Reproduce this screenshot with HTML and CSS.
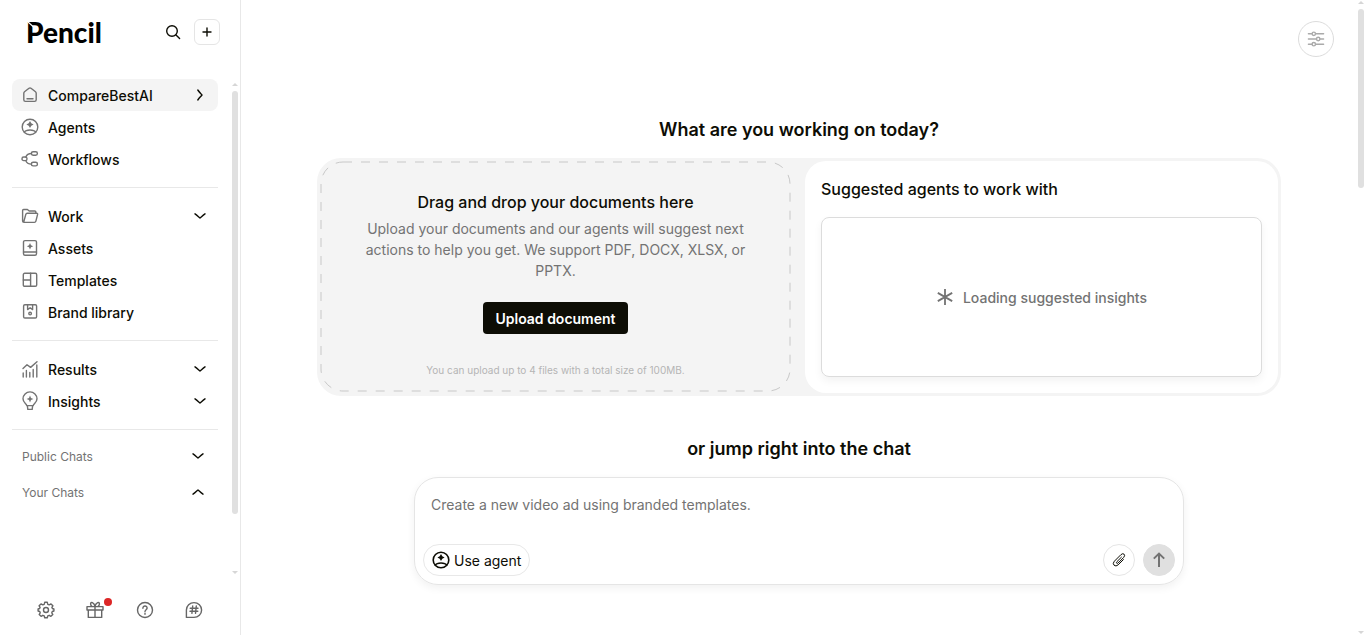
FILE: index.html
```html
<!DOCTYPE html>
<html lang="en">
<head>
    <meta charset="UTF-8">
    <meta name="viewport" content="width=device-width, initial-scale=1.0">
    <title>Pencil</title>
    <link rel="stylesheet" href="styles.css">
</head>
<body>
    <!-- shared icons -->
    <svg class="sprite" aria-hidden="true">
        <symbol id="chevron" viewBox="0 0 12 12">
            <path d="M1 3.8 C3.5 5.5 4.5 6.8 6 8 C7.5 6.8 8.5 5.5 11 3.8"/>
        </symbol>
        <symbol id="agent" viewBox="0 0 18 18">
            <circle cx="9" cy="9" r="7.8"/>
            <path d="M3.3 14.2 C5 11.2 13 11.2 14.7 14.2"/>
            <path class="solid" d="M9 3 L10.3 5.2 L12.6 6.5 L10.3 7.8 L9 10 L7.7 7.8 L5.4 6.5 L7.7 5.2 Z"/>
        </symbol>
    </svg>

    <div class="app">
        <aside class="sidebar">
            <header class="sidebar-header">
                <a class="logo" href="#">Pencil<svg class="logo-nib" viewBox="0 0 8 6" aria-hidden="true"><path d="M0 0 L5 4.5"/></svg></a>
                <button class="search-btn" aria-label="Search">
                    <svg class="icon" viewBox="0 0 16 16"><circle cx="7" cy="7" r="5.3"/><path d="M11 11 L14.6 14.6"/></svg>
                </button>
                <button class="new-btn" aria-label="New">
                    <svg class="icon" viewBox="0 0 16 16"><path d="M8 4 V12 M4 8 H12"/></svg>
                </button>
            </header>

            <div class="sidebar-body">
                <nav class="nav">
                    <div class="nav-group">
                        <a class="nav-item active" href="#">
                            <svg class="icon" viewBox="0 0 18 18"><path d="M2.8 7.2 Q2.8 6.4 3.5 5.8 L8 2.3 Q9 1.6 10 2.3 L14.5 5.8 Q15.2 6.4 15.2 7.2 V13.8 Q15.2 15.4 13.6 15.4 H4.4 Q2.8 15.4 2.8 13.8 Z M6 12.7 H12"/></svg>
                            <span>CompareBestAI</span>
                            <svg class="chevron right"><use href="#chevron"/></svg>
                        </a>
                        <a class="nav-item" href="#">
                            <svg class="icon"><use href="#agent"/></svg>
                            <span>Agents</span>
                        </a>
                        <a class="nav-item" href="#">
                            <svg class="icon" viewBox="0 0 18 18"><rect x="1" y="7" width="5" height="3.6" rx="1.7"/><rect x="10.4" y="1.7" width="6" height="3.6" rx="1.7"/><rect x="10.4" y="12.3" width="6" height="3.6" rx="1.7"/><path d="M4.8 7 C5.6 4.8 7.5 3.5 10.4 3.5 M4.8 10.6 C5.6 13 7.5 14.1 10.4 14.1"/></svg>
                            <span>Workflows</span>
                        </a>
                    </div>
                    <div class="nav-group">
                        <a class="nav-item" href="#">
                            <svg class="icon" viewBox="0 0 18 18"><path d="M14.8 6.2 V5 Q14.8 4 13.8 4 H8.2 L6.4 2.5 H2.6 Q1.6 2.5 1.6 3.5 V14 Q1.6 15.4 3 15.4 H13.4 Q14.6 15.4 14.9 14.2 L16.6 7.4 Q16.8 6.3 15.7 6.3 H6.2 Q5.1 6.3 4.8 7.4 L3 14 Q2.7 15.3 1.8 14.6"/></svg>
                            <span>Work</span>
                            <svg class="chevron"><use href="#chevron"/></svg>
                        </a>
                        <a class="nav-item" href="#">
                            <svg class="icon" viewBox="0 0 18 18"><rect x="2.5" y="1.6" width="13" height="14.6" rx="1.5"/><path d="M2.5 13 H15.5"/><path class="solid" d="M9 4 L10 6.2 L12.2 7.2 L10 8.2 L9 10.4 L8 8.2 L5.8 7.2 L8 6.2 Z"/></svg>
                            <span>Assets</span>
                        </a>
                        <a class="nav-item" href="#">
                            <svg class="icon" viewBox="0 0 18 18"><rect x="2.3" y="2.3" width="13.4" height="13" rx="1.4"/><path d="M9.6 2.3 V15.3 M2.3 9 H9.6"/></svg>
                            <span>Templates</span>
                        </a>
                        <a class="nav-item" href="#">
                            <svg class="icon" viewBox="0 0 18 18"><rect x="2.6" y="1.8" width="13" height="13.2" rx="1.3"/><path d="M6.6 1.8 V6.6 L9.1 4.8 L11.6 6.6 V1.8"/><circle cx="9.1" cy="10.6" r="1.3"/></svg>
                            <span>Brand library</span>
                        </a>
                    </div>
                    <div class="nav-group">
                        <a class="nav-item" href="#">
                            <svg class="icon" viewBox="0 0 18 18"><path d="M2 8.6 L6 4.8 L9.6 7.4 L16 1.8 M2.2 17 V13 M5.4 17 V10.4 M8.8 17 V12.4 M12.2 17 V9.4 M15.8 17 V5"/></svg>
                            <span>Results</span>
                            <svg class="chevron"><use href="#chevron"/></svg>
                        </a>
                        <a class="nav-item" href="#">
                            <svg class="icon bulb" viewBox="0 0 18 20"><path d="M5.8 14.6 C5.4 12.6 2 11.8 2 7.8 A7 6.9 0 0 1 16 7.8 C16 11.8 12.6 12.6 12.2 14.6 Z M6.4 14.8 L6.8 18.4 H11.2 L11.6 14.8"/><path class="solid" d="M9 4.6 L10 7 L12.4 8 L10 9 L9 11.4 L8 9 L5.6 8 L8 7 Z"/></svg>
                            <span>Insights</span>
                            <svg class="chevron"><use href="#chevron"/></svg>
                        </a>
                    </div>
                    <div class="nav-group chats">
                        <button class="chat-toggle" aria-expanded="false">
                            <span>Public Chats</span>
                            <svg class="chevron"><use href="#chevron"/></svg>
                        </button>
                        <button class="chat-toggle" aria-expanded="true">
                            <span>Your Chats</span>
                            <svg class="chevron up"><use href="#chevron"/></svg>
                        </button>
                    </div>
                </nav>
                <div class="scrollbar" aria-hidden="true">
                    <i class="arrow-up"></i>
                    <div class="track"><div class="thumb nav-thumb"></div></div>
                    <i class="arrow-down"></i>
                </div>
            </div>

            <footer class="sidebar-footer">
                <button aria-label="Settings">
                    <svg class="icon" viewBox="0 0 18 18"><circle cx="9" cy="9" r="2.5"/><path d="M7.7 1.3 H10.3 L10.8 3.3 L12.2 3.9 L14 2.9 L15.9 4.8 L14.9 6.4 L15.4 7.5 L16.9 8 V10 L15.3 10.5 L14.8 11.8 L15.8 13.5 L13.9 15.3 L12.2 14.3 L10.8 14.8 L10.3 16.7 H7.7 L7.2 14.8 L5.8 14.3 L4.1 15.3 L2.2 13.5 L3.2 11.8 L2.7 10.5 L1.1 10 V8 L2.6 7.5 L3.1 6.4 L2.1 4.8 L4 2.9 L5.8 3.9 L7.2 3.3 Z"/></svg>
                </button>
                <button class="gift" aria-label="What's new">
                    <svg class="icon" viewBox="0 0 18 18"><path d="M1 5.6 H17 V9 H1 Z M2.3 9 V16.4 H15.7 V9 M9 5.6 V16.4 M9 5.4 C8 1 4.6 .4 4.6 3 Q4.6 4.6 6 5.4 M9 5.4 C10 1 13.4 .4 13.4 3 Q13.4 4.6 12 5.4"/></svg>
                    <i class="badge"></i>
                </button>
                <button aria-label="Help">
                    <svg class="icon" viewBox="0 0 18 18"><circle cx="9" cy="9" r="7.5"/><path d="M6.9 7.2 C6.9 4.2 11.2 4.5 11.1 7.1 C11 8.8 9 8.7 9 10.6 M9 12.3 V13.3"/></svg>
                </button>
                <button aria-label="Community">
                    <svg class="icon" viewBox="0 0 18 18"><path d="M1.4 16.4 V9 A7.6 7.4 0 1 1 9 16.4 Z M7.7 5 L6.9 12.4 M11.3 5 L10.5 12.4 M5.2 7.2 H13 M5 10.2 H12.8"/></svg>
                </button>
            </footer>
        </aside>

        <main class="main">
            <button class="filter-btn" aria-label="Preferences">
                <svg class="icon" viewBox="0 0 18 18"><path d="M1.4 3.8 H5 M8.6 3.8 H16.6 M1.4 9 H9.4 M13 9 H16.6 M1.4 14.2 H5 M8.6 14.2 H16.6"/><circle cx="6.8" cy="3.8" r="1.7"/><circle cx="11.2" cy="9" r="1.7"/><circle cx="6.8" cy="14.2" r="1.7"/></svg>
            </button>

            <h1 class="title">What are you working on today?</h1>
            <section class="start-panel">
                <div class="dropzone">
                    <svg class="dash" aria-hidden="true"><rect x="0" y="0" width="100%" height="100%" rx="22"/></svg>
                    <div class="dropzone-content">
                        <h2>Drag and drop your documents here</h2>
                        <p>Upload your documents and our agents will suggest next actions to help you get. We support PDF, DOCX, XLSX, or PPTX.</p>
                        <button class="upload-btn">Upload document</button>
                        <small>You can upload up to 4 files with a total size of 100MB.</small>
                    </div>
                </div>
                <div class="suggested">
                    <h2>Suggested agents to work with</h2>
                    <div class="loading">
                        <svg class="icon" viewBox="0 0 18 18"><path d="M9 1 V17 M1.8 4.9 L16.2 13.1 M16.2 4.9 L1.8 13.1"/></svg>
                        <span>Loading suggested insights</span>
                    </div>
                </div>
            </section>

            <h1 class="title chat-title">or jump right into the chat</h1>
            <form class="chat-box">
                <textarea aria-label="Message" rows="1" placeholder="Create a new video ad using branded templates."></textarea>
                <div class="chat-actions">
                    <button type="button" class="agent-btn">
                        <svg class="icon"><use href="#agent"/></svg>
                        Use agent
                    </button>
                    <button type="button" class="round-btn" aria-label="Attach file">
                        <svg class="icon" viewBox="0 0 16 16"><path d="M10.4 5.2 L5.9 9.7 Q5.1 10.6 5.7 11.2 Q6.3 11.7 7.1 11 L12.6 5.5 Q14.4 3.5 13.1 2.2 Q11.7 1 9.9 2.7 L3.4 9.2 Q1.3 11.5 3 13.2 Q4.9 14.9 7.1 12.9 L12.4 7.6"/></svg>
                    </button>
                    <button type="submit" class="round-btn send" aria-label="Send">
                        <svg class="icon" viewBox="0 0 16 16"><path d="M8 15 V1.6 M2.8 6.6 L8 1.6 L13.2 6.6"/></svg>
                    </button>
                </div>
            </form>
        </main>

        <div class="scrollbar page-scroll" aria-hidden="true">
            <i class="arrow-up"></i>
            <div class="track"><div class="thumb page-thumb"></div></div>
            <i class="arrow-down"></i>
        </div>
    </div>
</body>
</html>
```

FILE: styles.css
```css
* {
    margin: 0;
    padding: 0;
    box-sizing: border-box;
}

body {
    font-family: Inter, "Liberation Sans", sans-serif;
    font-size: 14px;
    color: #0d0d05;
    background: #fff;
}

a {
    color: inherit;
    text-decoration: none;
}

button {
    font: inherit;
    color: inherit;
    background: none;
    border: none;
    cursor: pointer;
    display: flex;
    align-items: center;
    justify-content: center;
}

h1, h2 {
    font-weight: 500;
}

svg {
    fill: none;
    stroke: currentColor;
    stroke-linecap: round;
    stroke-linejoin: round;
}

.sprite {
    display: none;
}

.icon {
    width: 18px;
    height: 18px;
    flex: none;
    stroke-width: 1.4;
}

.solid {
    fill: currentColor;
    stroke: none;
}

.chevron {
    width: 12px;
    height: 12px;
    margin-left: auto;
    stroke-width: 1.4;
}

.chevron.right {
    transform: rotate(-90deg);
}

.chevron.up {
    transform: rotate(180deg);
}

.app {
    display: flex;
    height: 100vh;
    overflow: hidden;
}

/* sidebar */
.sidebar {
    width: 241px;
    flex: none;
    display: flex;
    flex-direction: column;
    border-right: 1px solid #e8e8e8;
}

.sidebar-header {
    display: flex;
    align-items: center;
    height: 63px;
    margin-bottom: 16px;
    padding: 0 20px 0 26px;
}

.logo {
    position: relative;
    margin-right: auto;
    font-family: Lato, sans-serif;
    font-size: 28px;
    font-weight: 900;
    line-height: 30px;
    color: #000;
}

.logo-nib {
    position: absolute;
    left: 2px;
    top: 5px;
    width: 8px;
    height: 6px;
    stroke: #fff;
    stroke-width: 1.2;
}

.search-btn {
    width: 26px;
    height: 26px;
    margin-right: 8px;
}

.search-btn .icon,
.new-btn .icon {
    width: 16px;
    height: 16px;
    stroke-width: 1.4;
}

.new-btn {
    width: 26px;
    height: 26px;
    border: 1px solid #e5e5e5;
    border-radius: 6px;
}

.sidebar-body {
    flex: 1;
    min-height: 0;
    display: flex;
}

.nav {
    flex: 1;
    padding: 0 14px 0 12px;
}

.nav-group {
    padding-bottom: 12px;
    margin-bottom: 12px;
    border-bottom: 1px solid #e8e8e8;
}

.nav-item {
    display: flex;
    align-items: center;
    gap: 9px;
    height: 32px;
    padding: 0 12px 0 9px;
    border-radius: 8px;
    font-weight: 500;
}

.nav-item .icon {
    color: #737373;
}

.nav-item .bulb {
    height: 20px;
}

.nav-item.active {
    background: #f4f4f4;
}

.nav-group.chats {
    margin-top: -4px;
    border: none;
}

.chat-toggle {
    width: 100%;
    height: 36px;
    padding: 0 14px 0 10px;
    font-size: 12px;
    color: #737373;
}

.chat-toggle .chevron {
    color: #0d0d05;
}

.sidebar-footer {
    display: flex;
    justify-content: space-between;
    padding: 0 37px 16px;
    margin-top: 24px;
    color: #666;
}

.gift {
    position: relative;
}

.badge {
    position: absolute;
    top: -3px;
    right: -8px;
    width: 8px;
    height: 8px;
    border-radius: 50%;
    background: #dc2626;
}

/* scrollbars */
.scrollbar {
    display: flex;
    flex-direction: column;
    align-items: center;
    width: 6px;
    margin: 4px 2px 3px 0;
}

.track {
    flex: 1;
    width: 100%;
    margin: 5px 0;
}

.thumb {
    border-radius: 3px;
    background: #e0e0e0;
}

.nav-thumb {
    height: 89%;
}

.page-thumb {
    height: 29%;
}

.arrow-up,
.arrow-down {
    border: 3px solid transparent;
}

.arrow-up {
    border-top: none;
    border-bottom-color: #d6d6d6;
}

.arrow-down {
    border-bottom: none;
    border-top-color: #d6d6d6;
}

.page-scroll {
    margin: 1px 1px 1px 0;
}

/* main */
.main {
    flex: 1;
    display: flex;
    flex-direction: column;
    align-items: center;
    padding: 21px 77px 0 76px;
}

.filter-btn {
    align-self: flex-end;
    flex: none;
    width: 36px;
    height: 36px;
    margin-right: -53px;
    border: 1px solid #dcdcdc;
    border-radius: 50%;
    color: #aaa;
}

.title {
    margin-top: 61px;
    font-size: 18px;
    font-weight: 600;
    line-height: 24px;
}

.start-panel {
    width: 100%;
    margin-top: 16px;
    display: grid;
    grid-template-columns: 485fr 473fr;
    padding: 3px;
    border-radius: 24px;
    background: #f4f4f4;
}

.dropzone {
    display: grid;
    margin: 1px 15px 2px 1px;
}

.dash,
.dropzone-content {
    grid-area: 1 / 1;
}

.dash {
    width: 100%;
    height: 100%;
    overflow: visible;
    stroke: #c8c8c8;
    stroke-linecap: butt;
    stroke-dasharray: 9 9;
}

.dropzone-content {
    display: flex;
    flex-direction: column;
    align-items: center;
    padding: 28px 36px 13px;
    text-align: center;
}

h2 {
    font-size: 16px;
    line-height: 24px;
}

.dropzone-content p {
    margin-top: 4px;
    line-height: 21px;
    color: #737373;
}

.upload-btn {
    height: 32px;
    margin-top: 21px;
    padding: 0 12px;
    border-radius: 4px;
    background: #0d0d05;
    color: #fff;
    font-weight: 600;
}

.dropzone-content small {
    margin-top: 28px;
    font-size: 10px;
    line-height: 16px;
    color: #b5b5b5;
}

.suggested {
    display: flex;
    flex-direction: column;
    padding: 16px;
    border-radius: 21px;
    background: #fff;
}

.loading {
    flex: 1;
    display: flex;
    align-items: center;
    justify-content: center;
    gap: 9px;
    margin-top: 16px;
    border: 1px solid #dcdcdc;
    border-radius: 8px;
    box-shadow: 0 4px 8px rgba(0, 0, 0, 0.05);
    color: #737373;
    font-weight: 500;
}

.loading .icon {
    stroke-width: 1.8;
    stroke-linecap: butt;
}

.chat-title {
    margin-top: 41px;
}

.chat-box {
    width: 80%;
    max-width: 770px;
    margin-top: 16px;
    padding: 16px 8px 8px;
    border: 1px solid #e5e5e5;
    border-radius: 24px;
    box-shadow: 0 3px 8px rgba(0, 0, 0, 0.06);
}

.chat-box textarea {
    display: block;
    width: 100%;
    height: 50px;
    padding: 0 8px;
    border: none;
    outline: none;
    resize: none;
    background: none;
    font: inherit;
    line-height: 21px;
}

.chat-box textarea::placeholder {
    color: #737373;
}

.chat-actions {
    display: flex;
    gap: 8px;
}

.agent-btn {
    gap: 4px;
    height: 32px;
    margin-right: auto;
    padding: 0 8px;
    border: 1px solid #e8e8e8;
    border-radius: 16px;
}

.agent-btn .icon {
    stroke-width: 1.6;
}

.round-btn {
    width: 32px;
    height: 32px;
    border: 1px solid #e5e5e5;
    border-radius: 50%;
}

.round-btn .icon {
    width: 16px;
    height: 16px;
    stroke-width: 1;
}

.round-btn.send {
    border-color: #e0e0e0;
    background: #e0e0e0;
    color: #737373;
}

.send .icon {
    stroke-width: 2;
    stroke-linecap: butt;
    stroke-linejoin: miter;
}
```
